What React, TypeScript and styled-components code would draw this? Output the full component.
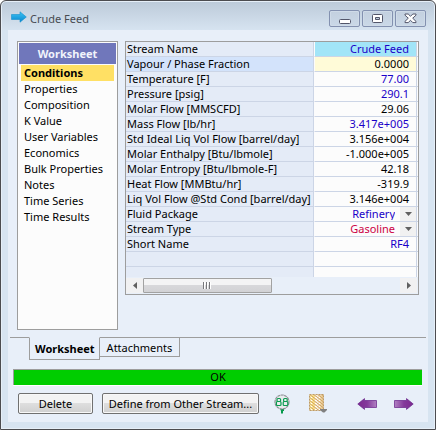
import React, { useState } from "react";
import styled, { createGlobalStyle } from "styled-components";

const GlobalStyle = createGlobalStyle`
  *, *::before, *::after { box-sizing: border-box; }
  body { margin: 0; background: #fff; }
  body, button, select { font-family: "Noto Sans", "Open Sans", sans-serif; font-size: 11px; line-height: 14px; color: #000; }
  button { margin: 0; padding: 0; border: 0; background: none; cursor: pointer; }
`;

const Window = styled.main`
  display: flex;
  flex-direction: column;
  min-height: 100vh;
  padding: 0 7px 7px;
  border: 1px solid #4c4c50;
  border-radius: 6px 6px 0 0;
  background: linear-gradient(#bccad9, #d7e4f1 30px);
  box-shadow: inset 0 0 0 1px #e6eff8;
`;

const TitleBar = styled.header`
  display: flex;
  align-items: center;
  height: 29px;
  padding: 2px 2px 0 3px;
`;

const Title = styled.h1`
  flex: 1;
  margin: 4px 0 0 3px;
  font-size: 11px;
  line-height: 16px;
  font-weight: 400;
  color: #474b52;
`;

const WindowButtons = styled.div`
  display: flex;
  gap: 2px;
  padding-top: 4px;
`;

const WindowButton = styled.button`
  display: grid;
  place-items: center;
  width: 31px;
  height: 17px;
  border: 1px solid #8391b0;
  border-radius: 2px;
  background: linear-gradient(#c3d0df, #cad8e7);
  box-shadow: inset 0 0 0 1px #cfdbe8;
`;

const Body = styled.div`
  flex: 1;
  display: flex;
  flex-direction: column;
  background: #e8eff9;
`;

const Panels = styled.div`
  flex: 1;
  display: flex;
  align-items: flex-start;
  gap: 7px;
  padding: 11px 9px 7px;
`;

const Sidebar = styled.nav`
  align-self: stretch;
  flex: 0 0 101px;
  padding: 1px;
  border: 1px solid #9d9d9d;
  background: #fcfcfc;
`;

const SidebarHeading = styled.h2`
  margin: 0;
  padding: 3px 0;
  font-size: 11px;
  line-height: 15px;
  font-weight: 700;
  text-align: center;
  color: #f1f3fb;
  background: #7077bb;
`;

const SidebarList = styled.ul`
  margin: 0;
  padding: 1px 2px;
  list-style: none;
`;

const SidebarItem = styled.button<{ $active: boolean }>`
  display: block;
  width: 100%;
  height: 16px;
  padding: 0 3px;
  text-align: left;
  white-space: nowrap;
  font-weight: ${(p) => (p.$active ? 700 : 400)};
  background: ${(p) => (p.$active ? "#ffe064" : "transparent")};
`;

const Grid = styled.section`
  flex: 1;
  min-width: 0;
  border: 1px solid #9d9d9d;
`;

const GridView = styled.div`
  height: 235px;
  overflow: hidden;
  background: #fcfcfc;
`;

const Table = styled.table`
  width: 100%;
  table-layout: fixed;
  border-collapse: separate;
  border-spacing: 0;
`;

const Row = styled.tr`
  height: 15px;
`;

const LabelCell = styled.th<{ $selected?: boolean }>`
  height: 15px;
  padding: 0 0 0 1px;
  border-bottom: 1px solid #ccd5e6;
  border-right: 1px solid #ccd5e6;
  background: ${(p) => (p.$selected ? "#d3e3fb" : "#e4ebf7")};
  text-align: left;
  vertical-align: top;
  white-space: nowrap;
  font-weight: 400;
  line-height: 13px;
`;

const ValueCell = styled.td<{ $color: string; $fill: string }>`
  height: 15px;
  padding: 0 7px 0 0;
  border-bottom: 1px solid #ccd5e6;
  border-right: 1px solid #ccd5e6;
  border-left: 1px solid #fcfcfc;
  background: ${(p) => p.$fill};
  color: ${(p) => p.$color};
  text-align: right;
  vertical-align: top;
  white-space: nowrap;
  line-height: 13px;
`;

const EdgeCell = styled.td`
  padding: 0;
  border-bottom: 1px solid #ccd5e6;
`;

const Picker = styled.div`
  display: grid;
  grid-template-columns: 1fr 16px;
  height: 14px;
  margin-right: -7px;
  align-items: stretch;
`;

const PickerSelect = styled.select<{ $color: string }>`
  grid-area: 1 / 1 / 2 / 3;
  appearance: none;
  width: 100%;
  height: 13px;
  padding: 0 21px 0 0;
  border: 0;
  background: transparent;
  color: ${(p) => p.$color};
  line-height: 13px;
  text-align-last: right;
`;

const PickerArrow = styled.span`
  grid-area: 1 / 2 / 2 / 3;
  display: grid;
  place-items: center;
  background: #f1f1f1;
  pointer-events: none;
`;

const ScrollBar = styled.div`
  display: flex;
  align-items: stretch;
  height: 17px;
  padding: 1px 1px 1px 0;
`;

const ScrollArrow = styled.button`
  display: grid;
  place-items: center;
  width: 17px;
  background: #f1f1f2;
`;

const ScrollTrack = styled.div`
  flex: 1;
  display: flex;
`;

const ScrollThumb = styled.button`
  display: grid;
  place-items: center;
  width: 50%;
  border: 1px solid #a2a2a2;
  border-radius: 1px;
  background: linear-gradient(#f4f4f5 0 45%, #d8d8db 50%, #d2d2d5);
`;

const Tabs = styled.div`
  display: flex;
  align-items: flex-start;
  height: 32px;
  padding: 0 2px;
`;

const TabLine = styled.span<{ $grow?: boolean }>`
  flex: ${(p) => (p.$grow ? "1" : "0 0 19px")};
  border-top: 1px solid #9d9d9d;
`;

const Tab = styled.button<{ $active: boolean }>`
  display: flex;
  height: ${(p) => (p.$active ? 23 : 20)}px;
  padding: ${(p) => (p.$active ? "4px 4px 0 5px" : "3px 7px 0")};
  border: 1px solid #9d9d9d;
  border-top-color: ${(p) => (p.$active ? "transparent" : "#9d9d9d")};
  border-left-width: ${(p) => (p.$active ? 1 : 0)}px;
  font-weight: ${(p) => (p.$active ? 700 : 400)};
`;

const Status = styled.output`
  height: 16px;
  margin: 0 6px 0 5px;
  border: 1px solid #9d9d9d;
  border-width: 1px 0 0 1px;
  background: #00cd00;
  box-shadow: 0 1px 0 #fff;
  text-align: center;
  line-height: 14px;
`;

const Footer = styled.footer`
  display: flex;
  align-items: center;
  padding: 8px 14px 8px 10px;
`;

const PushButton = styled.button<{ $width: number }>`
  width: ${(p) => p.$width}px;
  height: 21px;
  border: 1px solid #707070;
  border-radius: 2px;
  background: linear-gradient(#f3f3f3 0 48%, #dedede 50%, #d0d0d0);
  box-shadow: inset 0 0 0 1px #f8f8f8;
  white-space: nowrap;

  & + & { margin-left: 9px; }
`;

const IconGroup = styled.div`
  flex: 1;
  display: flex;
  align-items: center;
  justify-content: space-between;
  margin-left: 15px;
`;

const IconPair = styled.div<{ $gap: number }>`
  display: flex;
  align-items: center;
  gap: ${(p) => p.$gap}px;
`;

const IconButton = styled.button`
  display: block;
  svg { display: block; }
`;

const BLUE = "#1a00c8";
const CRIMSON = "#cc0044";
const BLACK = "#000";
const WHITE = "#fcfcfc";

type GridRow = { label: string; value: string; color?: string; fill?: string; options?: string[] };

const rows: GridRow[] = [
  { label: "Stream Name", value: "Crude Feed", color: BLUE, fill: "#a2e5f8" },
  { label: "Vapour / Phase Fraction", value: "0.0000", fill: "#fffbd8" },
  { label: "Temperature [F]", value: "77.00", color: BLUE },
  { label: "Pressure [psig]", value: "290.1", color: BLUE },
  { label: "Molar Flow [MMSCFD]", value: "29.06" },
  { label: "Mass Flow [lb/hr]", value: "3.417e+005", color: BLUE },
  { label: "Std Ideal Liq Vol Flow [barrel/day]", value: "3.156e+004" },
  { label: "Molar Enthalpy [Btu/lbmole]", value: "-1.000e+005" },
  { label: "Molar Entropy [Btu/lbmole-F]", value: "42.18" },
  { label: "Heat Flow [MMBtu/hr]", value: "-319.9" },
  { label: "Liq Vol Flow @Std Cond [barrel/day]", value: "3.146e+004" },
  { label: "Fluid Package", value: "Refinery", color: BLUE, options: ["Refinery"] },
  { label: "Stream Type", value: "Gasoline", color: CRIMSON, options: ["Gasoline"] },
  { label: "Short Name", value: "RF4", color: BLUE },
  { label: "", value: "" },
  { label: "", value: "" },
];

const pages = [
  "Conditions", "Properties", "Composition", "K Value", "User Variables",
  "Economics", "Bulk Properties", "Notes", "Time Series", "Time Results",
];

const StreamIcon = () => (
  <svg width="16" height="12" viewBox="0 0 16 12" aria-hidden="true">
    <defs>
      <linearGradient id="stream" x2="0" y2="1">
        <stop offset="0" stopColor="#3cc4f4" /><stop offset="1" stopColor="#0a86cf" />
      </linearGradient>
    </defs>
    <path d="M0.5 3.5H9V0.8L15.3 6L9 11.2V8.5H0.5Z" fill="url(#stream)" stroke="#1590cc" strokeWidth=".6" />
  </svg>
);

const ViewerIcon = () => (
  <svg width="16" height="20" viewBox="0 0 16 20" aria-hidden="true">
    <path d="M6 14.5H10V17H9V19.5H7V17Z" fill="#079a4d" />
    <circle cx="8" cy="8" r="7" fill="#e9ecee" stroke="#8e9094" strokeWidth="1.2" strokeDasharray="3 .5" />
    <g fill="none" stroke="#0a9c50" strokeWidth="1.2">
      <rect x="3" y="4.5" width="3.6" height="3" rx="1" /><rect x="2.4" y="7.5" width="4.6" height="4" rx="1" />
      <rect x="9.6" y="4.5" width="3.6" height="3" rx="1" /><rect x="9.2" y="7.5" width="4.6" height="4" rx="1" />
    </g>
  </svg>
);

const PatternIcon = () => (
  <svg width="18" height="19" viewBox="0 0 18 19" aria-hidden="true">
    <defs>
      <linearGradient id="gold" x2="1">
        <stop offset="0" stopColor="#fff3b5" /><stop offset=".3" stopColor="#f9dc80" />
        <stop offset=".5" stopColor="#f9f0e4" /><stop offset="1" stopColor="#e4c184" />
      </linearGradient>
      <pattern id="weave" width="4" height="3" patternUnits="userSpaceOnUse">
        <path d="M0 0L4 3" stroke="#cfa25c" strokeWidth="1" />
        <path d="M2 0h1v1h-1z" fill="#fff" />
      </pattern>
    </defs>
    <rect x=".5" y=".5" width="14" height="16" fill="url(#gold)" />
    <rect x=".5" y=".5" width="14" height="16" fill="url(#weave)" stroke="#bd9a68" strokeDasharray="2 1" />
    <path d="M11 15H18V16L15.5 18.5H14L11 16Z" fill="#808080" />
  </svg>
);

const NavArrow = ({ back }: { back?: boolean }) => {
  const id = back ? "violet-back" : "violet-next";
  return (
    <svg width="20" height="12" viewBox="0 0 20 12" aria-hidden="true">
      <defs>
        <linearGradient id={id} x1={back ? "0" : "1"} x2={back ? "1" : "0"}>
          <stop offset="0" stopColor="#7c2a90" /><stop offset=".5" stopColor="#84399b" />
          <stop offset="1" stopColor="#b080c2" />
        </linearGradient>
      </defs>
      <path
        d={back ? "M.8 6L7.5 .6V2.5H19.5V9.5H7.5V11.4Z" : "M19.2 6L12.5 .6V2.5H.5V9.5H12.5V11.4Z"}
        fill={`url(#${id})`} stroke="#703090" strokeWidth=".8"
      />
    </svg>
  );
};

const Caret = ({ d, w, h }: { d: string; w: number; h: number }) => (
  <svg width={w} height={h} viewBox={`0 0 ${w} ${h}`} aria-hidden="true"><path d={d} fill="#606060" /></svg>
);

export default function App() {
  const [page, setPage] = useState(pages[0]);
  const [tab, setTab] = useState("Worksheet");
  return (
    <>
      <GlobalStyle />
      <Window>
        <TitleBar>
          <StreamIcon />
          <Title>Crude Feed</Title>
          <WindowButtons>
            <WindowButton aria-label="Minimize">
              <svg width="12" height="13" viewBox="0 0 12 13"><rect x=".5" y="7.5" width="11" height="4" rx="1" fill="#fff" stroke="#53566a" /></svg>
            </WindowButton>
            <WindowButton aria-label="Maximize">
              <svg width="11" height="9" viewBox="0 0 11 9"><rect x=".5" y=".5" width="10" height="8" rx="1" fill="#fff" stroke="#53566a" /><path d="M3.5 3.5h4v2h-4z" fill="#bccada" stroke="#53566a" /></svg>
            </WindowButton>
            <WindowButton aria-label="Close">
              <svg width="13" height="11" viewBox="0 0 13 11"><path d="M1 1H4.2L6.5 3.3L8.8 1H12V2.2L8.7 5.2L12 8.4V9.6H8.8L6.5 7.3L4.2 9.6H1V8.4L4.3 5.2L1 2.2Z" fill="#fff" stroke="#53566a" /></svg>
            </WindowButton>
          </WindowButtons>
        </TitleBar>
        <Body>
          <Panels>
            <Sidebar aria-label="Worksheet pages">
              <SidebarHeading>Worksheet</SidebarHeading>
              <SidebarList>
                {pages.map((name) => (
                  <li key={name}>
                    <SidebarItem $active={name === page} onClick={() => setPage(name)}>{name}</SidebarItem>
                  </li>
                ))}
              </SidebarList>
            </Sidebar>
            <Grid>
              <GridView>
                <Table>
                  <colgroup>
                    <col />
                    <col width="103" />
                    <col width="1" />
                  </colgroup>
                  <tbody>
                    {rows.map((row, i) => (
                      <Row key={i}>
                        <LabelCell scope="row" $selected={i === 1}>{row.label}</LabelCell>
                        <ValueCell $color={row.color ?? BLACK} $fill={row.fill ?? WHITE}>
                          {row.options ? (
                            <Picker>
                              <PickerSelect aria-label={row.label} $color={row.color ?? BLACK} defaultValue={row.value}>
                                {row.options.map((o) => <option key={o}>{o}</option>)}
                              </PickerSelect>
                              <PickerArrow><Caret w={7} h={4} d="M0 0H7L3.5 4Z" /></PickerArrow>
                            </Picker>
                          ) : row.value}
                        </ValueCell>
                        <EdgeCell />
                      </Row>
                    ))}
                  </tbody>
                </Table>
              </GridView>
              <ScrollBar>
                <ScrollArrow aria-label="Scroll left"><Caret w={4} h={7} d="M4 0V7L0 3.5Z" /></ScrollArrow>
                <ScrollTrack>
                  <ScrollThumb aria-label="Scroll position">
                    <svg width="8" height="7" viewBox="0 0 8 7"><path d="M.5 0V7M3.5 0V7M6.5 0V7" stroke="#77777b" /><path d="M1.5 0V7M4.5 0V7M7.5 0V7" stroke="#fff" /></svg>
                  </ScrollThumb>
                </ScrollTrack>
                <ScrollArrow aria-label="Scroll right"><Caret w={4} h={7} d="M0 0V7L4 3.5Z" /></ScrollArrow>
              </ScrollBar>
            </Grid>
          </Panels>
          <Tabs role="tablist">
            <TabLine />
            {["Worksheet", "Attachments"].map((name) => (
              <Tab key={name} role="tab" aria-selected={name === tab} $active={name === tab} onClick={() => setTab(name)}>{name}</Tab>
            ))}
            <TabLine $grow />
          </Tabs>
          <Status>OK</Status>
          <Footer>
            <PushButton $width={75}>Delete</PushButton>
            <PushButton $width={157}>Define from Other Stream...</PushButton>
            <IconGroup>
              <IconPair $gap={19}>
                <IconButton aria-label="Stream viewer"><ViewerIcon /></IconButton>
                <IconButton aria-label="Worksheet format"><PatternIcon /></IconButton>
              </IconPair>
              <IconPair $gap={17}>
                <IconButton aria-label="Previous stream"><NavArrow back /></IconButton>
                <IconButton aria-label="Next stream"><NavArrow /></IconButton>
              </IconPair>
            </IconGroup>
          </Footer>
        </Body>
      </Window>
    </>
  );
}
